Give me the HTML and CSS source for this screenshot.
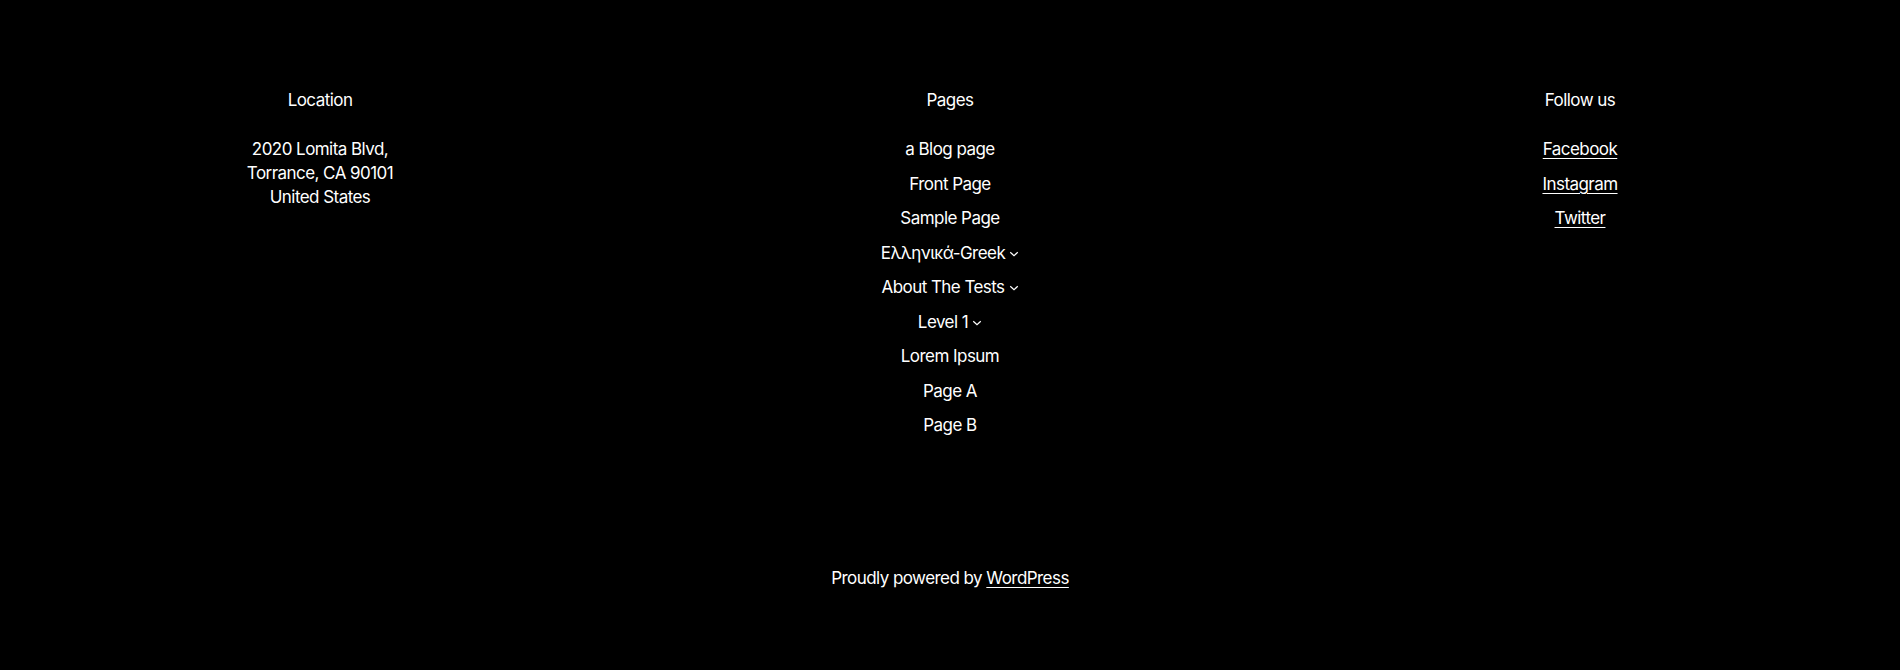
FILE: index.html
```html
<!DOCTYPE html>
<html lang="en">
<head>
<meta charset="utf-8">
<title>Footer</title>
<link rel="stylesheet" href="styles.css">
</head>
<body>
<footer class="site-footer">
  <div class="columns">
    <section class="col">
      <h2 class="col-title">Location</h2>
      <p class="address">2020 Lomita Blvd,<br>Torrance, CA 90101<br>United States</p>
    </section>
    <section class="col">
      <h2 class="col-title">Pages</h2>
      <ul class="nav">
        <li>a Blog page</li>
        <li>Front Page</li>
        <li>Sample Page</li>
        <li>Ελληνικά-Greek<svg class="chev" viewBox="0 0 12 12" width="12" height="12"><path d="M1.5 4L6 8L10.5 4" fill="none" stroke="currentColor" stroke-width="1.5"/></svg></li>
        <li>About The Tests<svg class="chev" viewBox="0 0 12 12" width="12" height="12"><path d="M1.5 4L6 8L10.5 4" fill="none" stroke="currentColor" stroke-width="1.5"/></svg></li>
        <li>Level 1<svg class="chev" viewBox="0 0 12 12" width="12" height="12"><path d="M1.5 4L6 8L10.5 4" fill="none" stroke="currentColor" stroke-width="1.5"/></svg></li>
        <li>Lorem Ipsum</li>
        <li>Page A</li>
        <li>Page B</li>
      </ul>
    </section>
    <section class="col">
      <h2 class="col-title">Follow us</h2>
      <ul class="nav">
        <li><a href="#">Facebook</a></li>
        <li><a href="#">Instagram</a></li>
        <li><a href="#">Twitter</a></li>
      </ul>
    </section>
  </div>
  <p class="credit">Proudly powered by <a href="#">WordPress</a></p>
</footer>
</body>
</html>
```
FILE: styles.css
```css
html, body {
  margin: 0;
  padding: 0;
  background: #000;
  color: #fff;
  font-family: Inter, "Noto Sans", sans-serif;
  font-size: 17px;
  letter-spacing: -0.55px;
  line-height: 24px;
}
.site-footer {
  padding: 88px 5px 0;
}
.columns {
  display: grid;
  grid-template-columns: repeat(3, 1fr);
  text-align: center;
}
.col-title {
  margin: 0 0 25px;
  font-size: 17px;
  font-weight: 400;
  line-height: 24px;
}
.address {
  margin: 0;
}
.nav {
  list-style: none;
  margin: 0;
  padding: 0;
  display: flex;
  flex-direction: column;
  align-items: center;
  gap: 10.5px;
}
.nav li {
  display: flex;
  align-items: center;
}
.chev {
  width: 10px;
  height: 10px;
  margin-left: 4px;
  margin-top: 2px;
}
a {
  color: #fff;
  text-decoration: underline;
  text-decoration-thickness: 1px;
  text-underline-offset: 3px;
}
.credit {
  margin: 129px 0 0;
  text-align: center;
}
```
